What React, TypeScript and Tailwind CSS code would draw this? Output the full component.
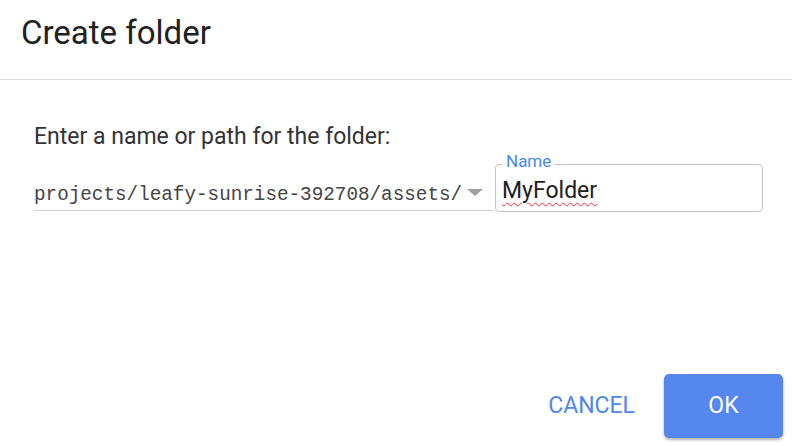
import React from "react"

export default function App() {
  return (
    <div className="w-[792px] h-[446px] bg-white flex flex-col font-['Roboto',sans-serif] text-[#212121]">
      <div className="h-[80px] border-b border-[#e0e0e0] pl-[21px] pt-[13px]">
        <h1 className="text-[33px] leading-[40px] font-normal">Create folder</h1>
      </div>
      <div className="flex-1 flex flex-col pl-[34px] pt-[43px]">
        <p className="text-[23px] leading-[28px] text-[#333]">Enter a name or path for the folder:</p>
        <div className="flex items-start mt-[13px]">
          <div className="w-[459px] h-[47px] border-b border-[#d0d0d0] flex items-end justify-between pb-[4px] pr-[10px]">
            <span className="font-['Liberation_Mono',monospace] text-[19.3px] leading-[22px] text-[#444]">
              projects/leafy-sunrise-392708/assets/
            </span>
            <span className="mb-[10px] w-0 h-0 border-l-[8px] border-r-[8px] border-t-[7px] border-l-transparent border-r-transparent border-t-[#9e9e9e]" />
          </div>
          <div className="relative ml-[2px] w-[268px] h-[48px] border border-[#c4c4c4] rounded-[4px] flex items-start pl-[6px] pt-[12px]">
            <span className="absolute left-[7px] -top-[14px] bg-white px-[3px] text-[17px] leading-[20px] text-[#4a86e8]">Name</span>
            <span className="text-[23px] leading-[28px] text-[#212121] underline decoration-wavy decoration-red-500 decoration-1 underline-offset-[4px]">MyFolder</span>
          </div>
        </div>
      </div>
      <div className="flex items-center justify-end gap-[29px] pr-[9px] pb-[8px]">
        <button className="text-[23px] text-[#4f86ec]">CANCEL</button>
        <button className="w-[119px] h-[64px] rounded-[5px] bg-[#5587ee] text-white text-[23px] shadow-[0_2px_3px_rgba(0,0,0,0.3)]">OK</button>
      </div>
    </div>
  )
}
